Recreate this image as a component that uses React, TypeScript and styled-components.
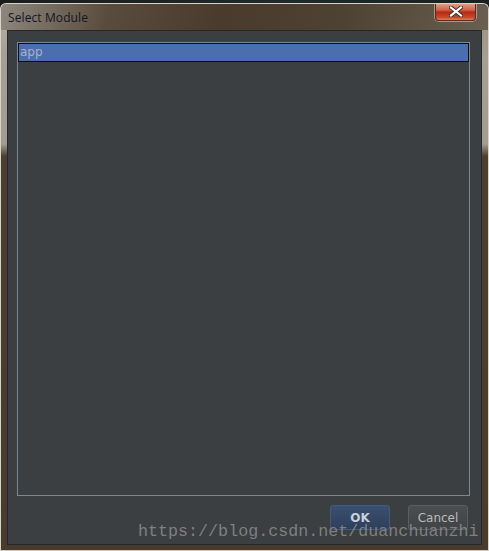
import React from 'react';
import styled, { createGlobalStyle } from 'styled-components';

const GlobalStyle = createGlobalStyle`
  html, body {
    margin: 0;
    padding: 0;
    background: #1d2222;
  }
  #root {
    width: 489px;
    height: 551px;
    overflow: hidden;
  }
`;

const modules = ['app'];

const App = () => {
  return (
    <Desktop>
      <GlobalStyle />
      <Window>
        <TitleBar>
          <Title>Select Module</Title>
          <CloseButton aria-label="Close">
            <svg width="14" height="11" viewBox="0 0 14 11">
              <path
                d="M2 1.5 L12 9.5 M12 1.5 L2 9.5"
                stroke="#3a2a28"
                strokeWidth="4"
                strokeLinecap="square"
              />
              <path
                d="M2 1.5 L12 9.5 M12 1.5 L2 9.5"
                stroke="#ffffff"
                strokeWidth="2.2"
                strokeLinecap="square"
              />
            </svg>
          </CloseButton>
        </TitleBar>
        <Content>
          <ListBox>
            {modules.map((name, i) => (
              <ListRow key={name} selected={i === 0}>
                {name}
              </ListRow>
            ))}
          </ListBox>
          <Footer>
            <Button primary>OK</Button>
            <Button>Cancel</Button>
          </Footer>
        </Content>
        <Watermark>https://blog.csdn.net/duanchuanzhi</Watermark>
      </Window>
    </Desktop>
  );
};

export default App;

const Desktop = styled.div`
  width: 489px;
  height: 551px;
  padding-top: 3px;
  box-sizing: border-box;
  background: linear-gradient(90deg, #1a1c1c, #1f2a2a 60%, #1a2020);
`;

const Window = styled.div`
  position: relative;
  height: 548px;
  box-sizing: border-box;
  display: flex;
  flex-direction: column;
  border: 1px solid #d8d4cc;
  border-bottom-color: #cfc8bc;
  border-radius: 6px 6px 0 0;
  background:
    radial-gradient(ellipse 70px 40px at 30px 10px, rgba(190, 184, 172, 0.9), rgba(190, 184, 172, 0) 100%),
    radial-gradient(ellipse 60px 40px at 470px 14px, rgba(150, 140, 125, 0.8), rgba(150, 140, 125, 0) 100%),
    linear-gradient(180deg, #a7a096 0px, #a39c92 140px, #4d3f30 152px, #4a3c2d 100%);
  overflow: hidden;
`;

const TitleBar = styled.div`
  height: 26px;
  flex: none;
  display: flex;
  justify-content: space-between;
  align-items: flex-start;
  padding-left: 7px;
  background: linear-gradient(100deg, #8d877d 0%, #5a4c3c 22%, #4a3b2c 45%, #4e4232 70%, #6a5f50 100%);
`;

const Title = styled.div`
  margin-top: 5px;
  font-family: 'Open Sans', 'Noto Sans', sans-serif;
  font-size: 12px;
  color: #141428;
  letter-spacing: 0.1px;
`;

const CloseButton = styled.button`
  width: 41px;
  height: 18px;
  margin: -1px 12px 0 0;
  padding: 0;
  display: flex;
  align-items: center;
  justify-content: center;
  border: 1px solid #5a2a22;
  border-top: none;
  border-radius: 0 0 4px 4px;
  box-shadow: 0 0 0 1px rgba(230, 220, 210, 0.5);
  background: linear-gradient(180deg, #e7a48f 0%, #d2644a 40%, #b52a12 55%, #c84a2c 85%, #e0805e 100%);
`;

const Content = styled.div`
  flex: 1;
  margin: 0 6px 5px 6px;
  display: flex;
  flex-direction: column;
  padding: 11px 11px 0 9px;
  background: #3c3f41;
  border: 1px solid #25282a;
`;

const ListBox = styled.div`
  flex: 1;
  border: 1px solid #7a8794;
  background: #3c3f41;
`;

const ListRow = styled.div<{ selected?: boolean }>`
  height: 17px;
  line-height: 17px;
  padding-left: 1px;
  font-family: 'DejaVu Sans', 'Noto Sans', sans-serif;
  font-size: 12px;
  color: ${(props) => (props.selected ? '#a9b3c8' : '#bbbbbb')};
  background: ${(props) => (props.selected ? '#4b6eaf' : 'transparent')};
  border: 1px solid ${(props) => (props.selected ? '#0c0e12' : 'transparent')};
`;

const Footer = styled.div`
  flex: none;
  display: flex;
  justify-content: flex-end;
  gap: 18px;
  padding: 9px 2px 14px 0;
`;

const Button = styled.button<{ primary?: boolean }>`
  width: 60px;
  height: 25px;
  padding: 0;
  border-radius: 3px;
  font-family: 'DejaVu Sans', 'Noto Sans', sans-serif;
  font-size: 12px;
  font-weight: ${(props) => (props.primary ? 'bold' : 'normal')};
  color: ${(props) => (props.primary ? '#c6cfdc' : '#bbbbbb')};
  border: 1px solid ${(props) => (props.primary ? '#46597a' : '#5a5e60')};
  background: ${(props) =>
    props.primary
      ? 'linear-gradient(180deg, #3a5070 0%, #2d3f5a 100%)'
      : 'linear-gradient(180deg, #4a4e50 0%, #404446 100%)'};
`;

const Watermark = styled.div`
  position: absolute;
  left: 137px;
  bottom: 9px;
  font-family: 'Liberation Mono', 'DejaVu Sans Mono', monospace;
  font-size: 16.7px;
  line-height: 18px;
  color: rgba(150, 150, 150, 0.75);
  white-space: nowrap;
  pointer-events: none;
`;
